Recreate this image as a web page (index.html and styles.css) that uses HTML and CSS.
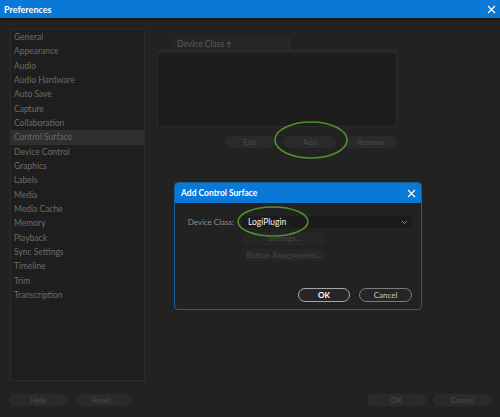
FILE: index.html
```html
<!DOCTYPE html>
<html>
<head>
<meta charset="utf-8">
<link rel="stylesheet" href="styles.css">
</head>
<body>
<div class="window">
  <div class="titlebar">
    <span class="title">Preferences</span>
    <svg class="close" width="9" height="9" viewBox="0 0 9 9"><path d="M1 1L8 8M8 1L1 8" stroke="#fff" stroke-width="1.2"/></svg>
  </div>
  <div class="content">
    <ul class="sidebar">
      <li>General</li>
      <li>Appearance</li>
      <li>Audio</li>
      <li>Audio Hardware</li>
      <li>Auto Save</li>
      <li>Capture</li>
      <li>Collaboration</li>
      <li class="active">Control Surface</li>
      <li>Device Control</li>
      <li>Graphics</li>
      <li>Labels</li>
      <li>Media</li>
      <li>Media Cache</li>
      <li>Memory</li>
      <li>Playback</li>
      <li>Sync Settings</li>
      <li>Timeline</li>
      <li>Trim</li>
      <li>Transcription</li>
    </ul>
    <div class="panel">
      <div class="colhead"><span class="colname">Device Class <span class="sort">&#x2191;</span></span></div>
      <div class="table"></div>
      <div class="row-buttons">
        <span class="pill w50">Edit</span>
        <span class="pill w52">Add</span>
        <span class="pill w52">Remove</span>
      </div>
    </div>
  </div>
  <div class="footer">
    <div class="group">
      <span class="pill f59">Help</span>
      <span class="pill f58">Reset...</span>
    </div>
    <div class="group">
      <span class="pill f59">OK</span>
      <span class="pill f59">Cancel</span>
    </div>
  </div>
</div>

<div class="dialog">
  <div class="dtitle">
    <span>Add Control Surface</span>
    <svg class="dclose" width="9" height="9" viewBox="0 0 9 9"><path d="M1 1L8 8M8 1L1 8" stroke="#fff" stroke-width="1.2"/></svg>
  </div>
  <div class="dbody">
    <div class="field">
      <span class="label">Device Class:</span>
      <div class="select">
        <span>LogiPlugin</span>
        <svg width="7" height="5" viewBox="0 0 7 5"><path d="M1 1L3.5 3.5L6 1" stroke="#888" stroke-width="1" fill="none"/></svg>
      </div>
    </div>
    <div class="subbtns">
      <span class="dpill">Settings...</span>
      <span class="dpill">Button Assignments...</span>
    </div>
    <div class="dactions">
      <span class="btn ok">OK</span>
      <span class="btn cancel">Cancel</span>
    </div>
  </div>
</div>

<svg class="mark mark-add" width="76" height="40" viewBox="0 0 76 40"><ellipse cx="38" cy="20" rx="36" ry="18" fill="none" stroke="#4f8f2f" stroke-width="1.6"/></svg>
<svg class="mark mark-logi" width="74" height="33" viewBox="0 0 74 33"><ellipse cx="37" cy="16.5" rx="35" ry="14.5" fill="none" stroke="#4f8f2f" stroke-width="1.6"/></svg>
</body>
</html>
```

FILE: styles.css
```css
* { box-sizing: border-box; }
html, body { margin: 0; padding: 0; }
body {
  width: 500px;
  height: 417px;
  background: #222222;
  font-family: Lato, "Open Sans", sans-serif;
  font-size: 8.5px;
  overflow: hidden;
  position: relative;
}
.window { display: flex; flex-direction: column; height: 417px; }
.titlebar {
  height: 18px;
  background: #0a78d6;
  border-bottom: 2px solid #1a1a1a;
  display: flex;
  align-items: center;
  justify-content: space-between;
  padding: 0 4px 0 4px;
  box-sizing: content-box;
}
.title { color: #fff; font-weight: 700; font-size: 9px; }
.content { display: flex; padding: 9px 0 0 10px; }
.sidebar {
  list-style: none;
  margin: 0;
  padding: 0;
  width: 135px;
  height: 352px;
  background: #1e1e1e;
  border: 1px solid #2c2c2c;
}
.sidebar li {
  height: 14.33px;
  line-height: 14.33px;
  padding-left: 3px;
  color: #6c6c6c;
  white-space: nowrap;
}
.sidebar li.active { background: #303030; color: #686868; }
.panel { margin-left: 12px; width: 240px; display: flex; flex-direction: column; }
.colhead {
  margin-top: 9px;
  height: 13px;
  border-bottom: 1px solid #2e2e2e;
  padding-left: 16px;
  display: flex;
}
.colname {
  width: 117px;
  height: 12px;
  line-height: 13px;
  background: #262626;
  border-right: 1px solid #303030;
  padding-left: 4px;
  color: #5c5c5c;
}
.sort { font-size: 7px; font-weight: 700; }
.table {
  margin-top: 1px;
  height: 75px;
  background: #1d1d1d;
  border: 1px solid #2a2a2a;
}
.row-buttons { display: flex; justify-content: flex-end; gap: 9px; margin-top: 9px; }
.pill {
  height: 12px;
  line-height: 12px;
  border-radius: 6px;
  background: #2a2a2a;
  color: #4a4a4a;
  text-align: center;
  font-size: 8px;
}
.w50 { width: 50px; }
.w52 { width: 52px; }
.footer {
  display: flex;
  justify-content: space-between;
  padding: 0 8px 0 9px;
  margin-top: 13px;
}
.group { display: flex; gap: 7px; }
.f59 { width: 59px; }
.f58 { width: 58px; }

.dialog {
  position: absolute;
  left: 174px;
  top: 182px;
  width: 248px;
  height: 128px;
  background: #222222;
  border: 1px solid #1c5f96;
  border-radius: 4px;
  overflow: hidden;
  display: flex;
  flex-direction: column;
}
.dtitle {
  height: 20px;
  background: #0a78d6;
  display: flex;
  align-items: center;
  justify-content: space-between;
  padding: 0 5px 0 6px;
  color: #fff;
  font-size: 8.5px;
  font-weight: 700;
  flex-shrink: 0;
}
.dbody { flex: 1; display: flex; flex-direction: column; padding: 13px 9px 7px 0; }
.field { display: flex; align-items: center; }
.label { width: 59px; text-align: right; color: #8e8e8e; font-size: 8px; }
.select {
  margin-left: 8px;
  width: 170px;
  height: 12px;
  background: #1b1b1b;
  display: flex;
  align-items: center;
  justify-content: space-between;
  padding: 0 4px 0 6px;
  color: #f2f2f2;
  font-size: 8.5px;
}
.subbtns { display: flex; flex-direction: column; gap: 4px; margin: 4px 0 0 68px; }
.dpill {
  width: 83px;
  height: 12.5px;
  line-height: 12.5px;
  border-radius: 6px;
  background: #262626;
  color: #484848;
  text-align: center;
  font-size: 8px;
}
.dactions { margin-top: auto; display: flex; justify-content: flex-end; gap: 9px; }
.btn {
  height: 14px;
  line-height: 12px;
  border-radius: 7px;
  text-align: center;
  font-size: 8px;
  background: #262626;
}
.ok { width: 52px; border: 1px solid #a6a6a6; color: #fff; font-weight: 700; }
.cancel { width: 53px; border: 1px solid #7a7a7a; color: #c8c8c8; }

.mark { position: absolute; }
.mark-add { left: 273px; top: 120px; }
.mark-logi { left: 236px; top: 205px; }
```
